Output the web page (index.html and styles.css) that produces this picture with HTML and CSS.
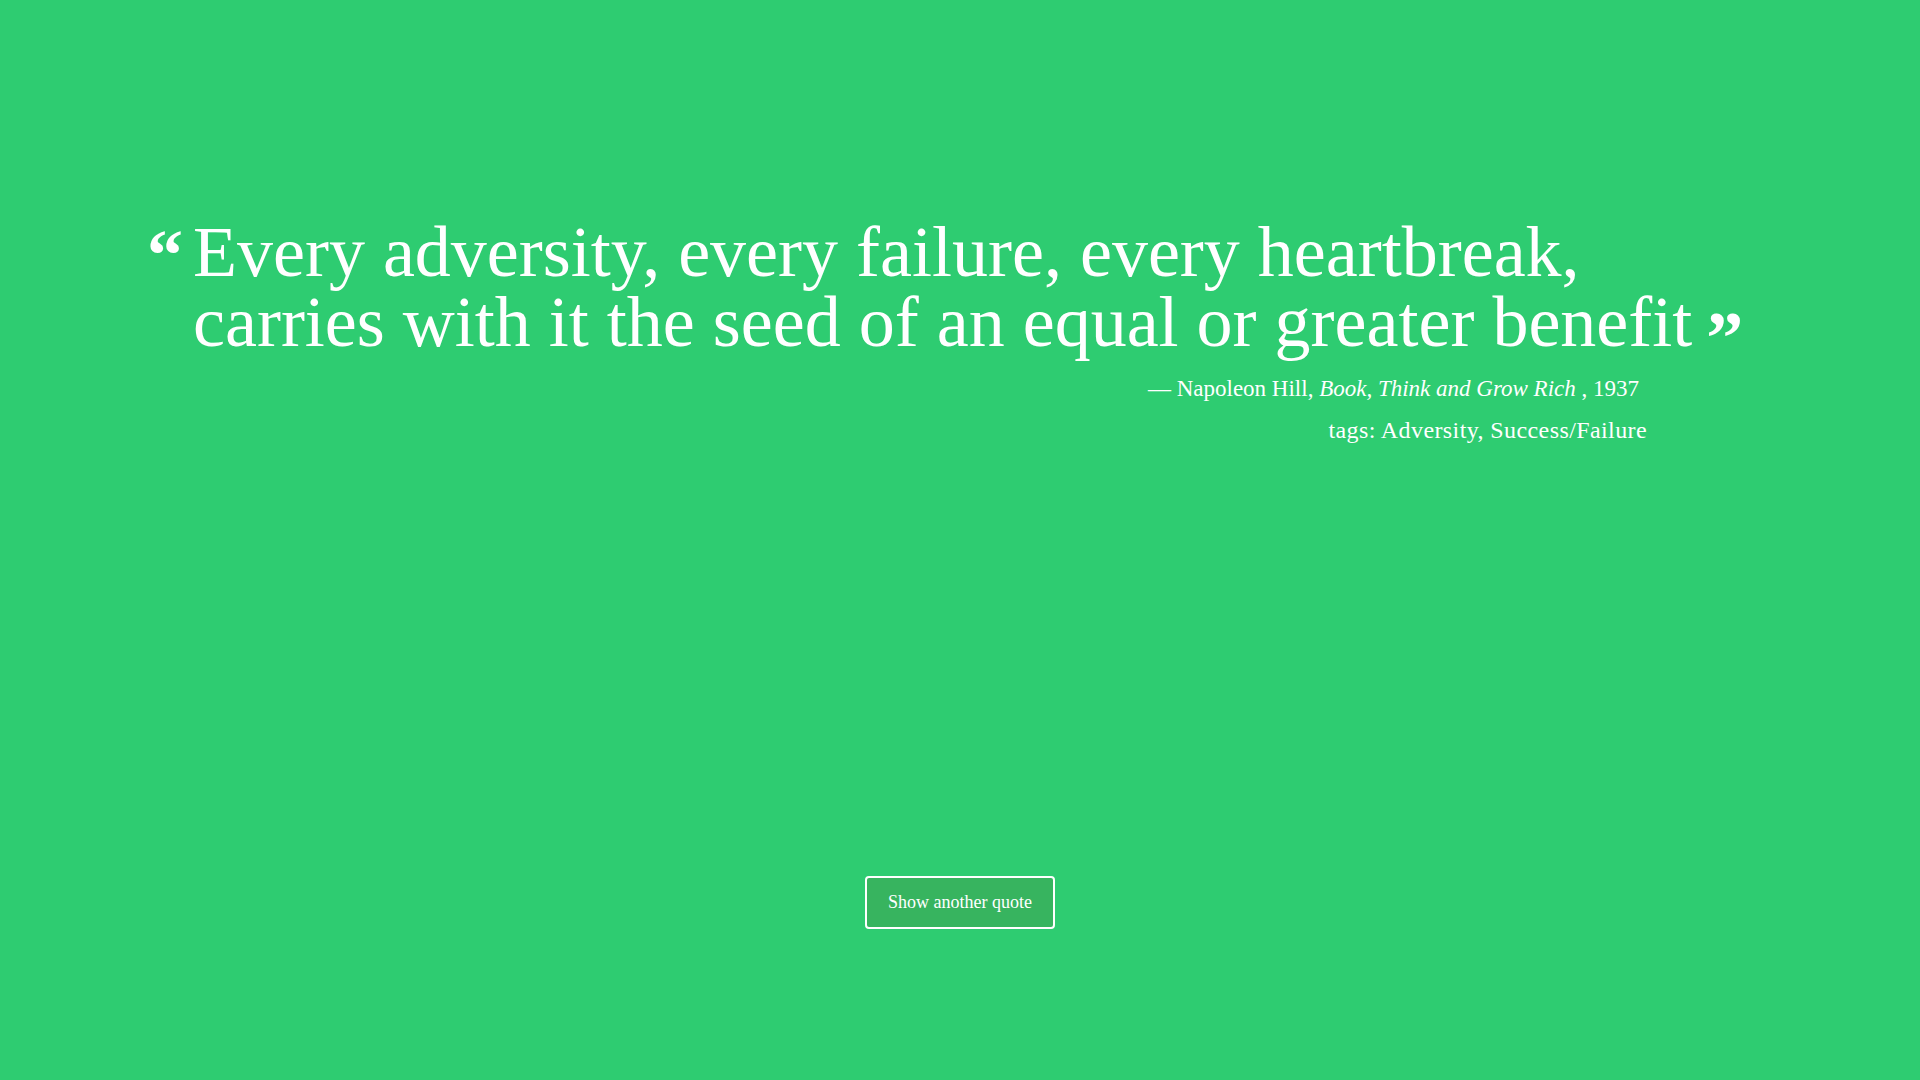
FILE: index.html
```html
<!DOCTYPE html>
<html lang="en">
<head>
<meta charset="utf-8">
<title>Random Quote</title>
<link rel="stylesheet" href="styles.css">
</head>
<body>
<main class="page">
  <section class="quote-box">
    <blockquote class="quote">
      <span class="mark-open">“</span>
      <p class="quote-text">Every adversity, every failure, every heartbreak,<br>carries with it the seed of an equal or greater benefit<span class="mark-close">”</span></p>
    </blockquote>
    <p class="author">— Napoleon Hill, <cite>Book, Think and Grow Rich</cite> , 1937</p>
    <p class="tags">tags: Adversity, Success/Failure</p>
  </section>
  <div class="actions">
    <button class="btn" type="button">Show another quote</button>
  </div>
</main>
</body>
</html>
```
FILE: styles.css
```css
html, body {
  margin: 0;
  padding: 0;
}
body {
  background: #2ecc71;
  color: #ffffff;
  font-family: "Liberation Serif", "Times New Roman", serif;
}
.page {
  min-height: 100vh;
  box-sizing: border-box;
  padding-top: 217px;
  display: flex;
  flex-direction: column;
}
.quote-box {
  margin: 0 192px 0 147px;
}
.quote {
  margin: 0;
  display: flex;
  align-items: flex-start;
}
.mark-open {
  flex: 0 0 46px;
  font-weight: 700;
  font-size: 72px;
  line-height: 70px;
  height: 70px;
  position: relative;
  top: 3px;
}
.quote-text {
  margin: 0;
  font-size: 72px;
  line-height: 70px;
  white-space: nowrap;
}
.mark-close {
  font-weight: 700;
  font-size: 74px;
  line-height: 0;
  margin-left: 14px;
  position: relative;
  top: 17px;
}
.author, .tags {
  margin: 0;
  text-align: right;
  font-size: 23px;
  line-height: 30px;
}
.author {
  margin-top: 17px;
  padding-right: 89px;
}
.author cite {
  font-style: italic;
}
.tags {
  margin-top: 11px;
  padding-right: 81px;
  font-size: 24px;
  letter-spacing: 0.4px;
}
.actions {
  margin-top: 431px;
  display: flex;
  justify-content: center;
}
.btn {
  width: 190px;
  height: 53px;
  padding: 0;
  background: #37b45f;
  border: 2px solid #ffffff;
  border-radius: 4px;
  color: #ffffff;
  font-family: "Liberation Serif", "Times New Roman", serif;
  font-size: 18px;
  cursor: pointer;
}
```
